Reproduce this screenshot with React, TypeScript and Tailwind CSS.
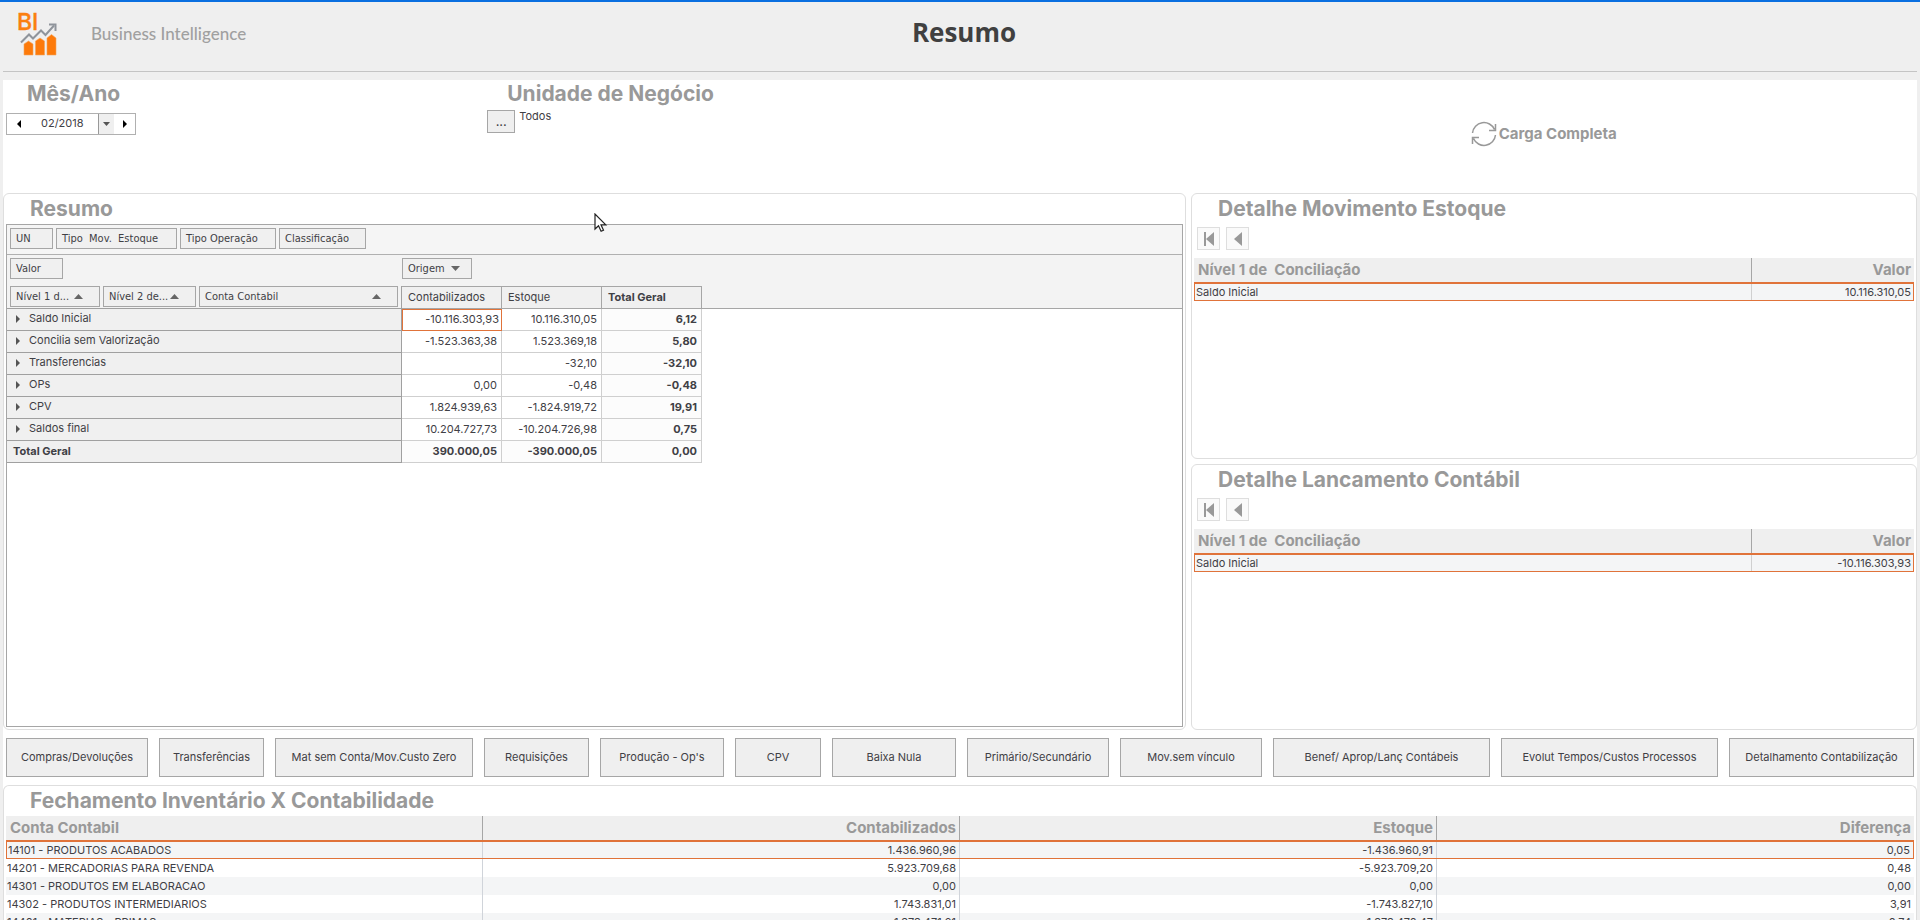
import type { ReactNode } from 'react'

interface PivotRow {
  label: string
  contabilizados: string
  estoque: string
  total: string
}

interface DetailPanelProps {
  title: string
  value: string
}

const pivotRows: PivotRow[] = [
  { label: 'Saldo Inicial', contabilizados: '-10.116.303,93', estoque: '10.116.310,05', total: '6,12' },
  { label: 'Concilia sem Valorização', contabilizados: '-1.523.363,38', estoque: '1.523.369,18', total: '5,80' },
  { label: 'Transferencias', contabilizados: '', estoque: '-32,10', total: '-32,10' },
  { label: 'OPs', contabilizados: '0,00', estoque: '-0,48', total: '-0,48' },
  { label: 'CPV', contabilizados: '1.824.939,63', estoque: '-1.824.919,72', total: '19,91' },
  { label: 'Saldos final', contabilizados: '10.204.727,73', estoque: '-10.204.726,98', total: '0,75' },
]

const actions = [
  { label: 'Compras/Devoluções', size: 'flex-[140_1_0%]' },
  { label: 'Transferências', size: 'flex-[103_1_0%]' },
  { label: 'Mat sem Conta/Mov.Custo Zero', size: 'flex-[196_1_0%]' },
  { label: 'Requisições', size: 'flex-[103_1_0%]' },
  { label: "Produção - Op's", size: 'flex-[122_1_0%]' },
  { label: 'CPV', size: 'flex-[84_1_0%]' },
  { label: 'Baixa Nula', size: 'flex-[122_1_0%]' },
  { label: 'Primário/Secundário', size: 'flex-[140_1_0%]' },
  { label: 'Mov.sem vínculo', size: 'flex-[140_1_0%]' },
  { label: 'Benef/ Aprop/Lanç Contábeis', size: 'flex-[215_1_0%]' },
  { label: 'Evolut Tempos/Custos Processos', size: 'flex-[215_1_0%]' },
  { label: 'Detalhamento Contabilização', size: 'flex-[183_1_0%]' },
]

const closingRows = [
  ['14101 - PRODUTOS ACABADOS', '1.436.960,96', '-1.436.960,91', '0,05'],
  ['14201 - MERCADORIAS PARA REVENDA', '5.923.709,68', '-5.923.709,20', '0,48'],
  ['14301 - PRODUTOS EM ELABORACAO', '0,00', '0,00', '0,00'],
  ['14302 - PRODUTOS INTERMEDIARIOS', '1.743.831,01', '-1.743.827,10', '3,91'],
  ['14401 - MATERIAS - PRIMAS', '1.373.471,21', '-1.373.470,47', '0,74'],
]

function Logo() {
  return (
    <svg className="h-12 w-11 overflow-visible" viewBox="0 0 44 48" aria-hidden="true">
      <text x="2" y="20" fontFamily="Inter, sans-serif" fontSize="23" fontWeight="500" fill="#fb7f10" stroke="#fb7f10" strokeWidth="0.4">
        BI
      </text>
      <path d="M6 32.500l8-8 4 4 8-8 4.500 4.500L39 15.500" fill="none" stroke="#8f949b" strokeWidth="2" />
      <path d="M34 14.500h6.500V21" fill="none" stroke="#8f949b" strokeWidth="2" />
      <path d="M9 45V34l4.500-3 4.500 3v11zM20.500 45V31l4.500-3 4.500 3v14zM32 45V28l4.500-3.500L41 28v17z" fill="#fd7a0a" stroke="#f3a45c" strokeWidth="0.6" />
    </svg>
  )
}

function Triangle({ points, className }: { points: string; className: string }) {
  return (
    <svg className={`shrink-0 ${className}`} viewBox="0 0 10 10" preserveAspectRatio="none" fill="currentColor" aria-hidden="true">
      <polygon points={points} />
    </svg>
  )
}

const UP = '0,10 5,0 10,10'
const DOWN = '0,0 10,0 5,10'
const LEFT = '10,0 0,5 10,10'
const RIGHT = '0,0 10,5 0,10'

function FieldChip({ className = '', children }: { className?: string; children: ReactNode }) {
  return (
    <button
      type="button"
      className={`flex h-[21px] items-center whitespace-pre border border-[#a6a6a6] bg-[#f0f0f0] px-[5px] text-left font-['DejaVu_Sans_Condensed',sans-serif] text-[11px] leading-none ${className}`}
    >
      {children}
    </button>
  )
}

function PanelTitle({ children }: { children: ReactNode }) {
  return <h2 className="pl-6 text-[21px] font-bold leading-[30px] text-[#999]">{children}</h2>
}

function PivotGrid() {
  return (
    <div className="flex-1 border border-[#a6a6a6] bg-white">
      <div className="flex h-[30px] gap-[3px] border-b border-[#b0b0b0] bg-[#f5f5f5] px-[3px] pt-[3px]">
        <FieldChip className="w-[43px]">UN</FieldChip>
        <FieldChip className="w-[121px]">Tipo  Mov.  Estoque</FieldChip>
        <FieldChip className="w-24">Tipo Operação</FieldChip>
        <FieldChip className="w-[87px]">Classificação</FieldChip>
      </div>
      <table className="w-full table-fixed border-separate border-spacing-0 text-[11px]">
        <colgroup>
          <col className="w-[395px]" />
          <col className="w-[100px]" />
          <col className="w-[100px]" />
          <col className="w-[100px]" />
          <col />
        </colgroup>
        <thead className="bg-[#f3f3f3]">
          <tr className="h-[31px] align-top">
            <td className="px-[3px] pt-[3px]">
              <FieldChip className="w-[53px]">Valor</FieldChip>
            </td>
            <td className="pt-[3px]" colSpan={4}>
              <FieldChip className="w-[70px]">
                Origem
                <Triangle points={DOWN} className="ml-1.5 h-[5px] w-[9px] text-[#666]" />
              </FieldChip>
            </td>
          </tr>
          <tr className="h-[23px]">
            <td className="border-b border-r border-[#a0a0a0] px-[3px] pb-px align-top">
              <div className="flex gap-[3px]">
                <FieldChip className="w-[90px] justify-between pr-4">
                  Nível 1 d...
                  <Triangle points={UP} className="h-[5px] w-[9px] text-[#666]" />
                </FieldChip>
                <FieldChip className="w-[93px] justify-between pr-4">
                  Nível 2 de...
                  <Triangle points={UP} className="h-[5px] w-[9px] text-[#666]" />
                </FieldChip>
                <FieldChip className="flex-1 justify-between pr-4">
                  Conta Contabil
                  <Triangle points={UP} className="h-[5px] w-[9px] text-[#666]" />
                </FieldChip>
              </div>
            </td>
            <th className="border-b border-r border-t border-[#a6a6a6] bg-[#f0f0f0] px-1.5 text-left font-normal leading-none">Contabilizados</th>
            <th className="border-b border-r border-t border-[#a6a6a6] bg-[#f0f0f0] px-1.5 text-left font-normal leading-none">Estoque</th>
            <th className="border-b border-r border-t border-[#a6a6a6] bg-[#f0f0f0] px-1.5 text-left font-bold leading-none">Total Geral</th>
            <td className="border-b border-[#a6a6a6]" />
          </tr>
        </thead>
        <tbody>
          {pivotRows.map((row, i) => (
            <tr key={row.label} className="h-[22px]">
              <th className="border-b border-r border-[#a0a0a0] bg-[#f0f0f0] pl-[9px] text-left font-normal leading-none">
                <button type="button" className="flex items-center gap-[9px] pb-0.5">
                  <Triangle points={RIGHT} className="h-2 w-1 text-[#555]" />
                  {row.label}
                </button>
              </th>
              <td
                className={
                  i === 0
                    ? 'border border-[#e0733a] pb-0.5 pr-0.5 text-right leading-none'
                    : 'border-b border-r border-[#cfcfcf] pr-1 text-right leading-none'
                }
              >
                {row.contabilizados}
              </td>
              <td className="border-b border-r border-[#cfcfcf] pr-1 text-right leading-none">{row.estoque}</td>
              <td className="border-b border-r border-[#cfcfcf] bg-[#fcfcfc] pr-1 text-right font-bold leading-none">{row.total}</td>
              <td />
            </tr>
          ))}
          <tr className="h-[22px] font-bold">
            <th className="border-b border-r border-[#a0a0a0] bg-[#f0f0f0] pl-1.5 text-left leading-none">Total Geral</th>
            <td className="border-b border-r border-[#cfcfcf] bg-[#fcfcfc] pr-1 text-right leading-none">390.000,05</td>
            <td className="border-b border-r border-[#cfcfcf] bg-[#fcfcfc] pr-1 text-right leading-none">-390.000,05</td>
            <td className="border-b border-r border-[#cfcfcf] bg-[#fcfcfc] pr-1 text-right leading-none">0,00</td>
            <td />
          </tr>
        </tbody>
      </table>
    </div>
  )
}

function DetailPanel({ title, value }: DetailPanelProps) {
  return (
    <section className="flex-1 rounded-md border border-[#dedede] bg-white px-0.5">
      <PanelTitle>{title}</PanelTitle>
      <div className="flex gap-1.5 px-[3px] pb-2 pt-[3px] text-[#999]">
        <button type="button" aria-label="Primeiro" className="flex h-[23px] w-[23px] items-center justify-center border border-[#dedede] bg-[#fafafa]">
          <span className="h-3.5 w-0.5 bg-[#999]" />
          <Triangle points={LEFT} className="h-3.5 w-2" />
        </button>
        <button type="button" aria-label="Anterior" className="flex h-[23px] w-[23px] items-center justify-center border border-[#dedede] bg-[#fafafa]">
          <Triangle points={LEFT} className="h-3.5 w-2" />
        </button>
      </div>
      <table className="w-full table-fixed border-separate border-spacing-0">
        <colgroup>
          <col />
          <col className="w-[162px]" />
        </colgroup>
        <thead>
          <tr className="h-6 bg-[#efefef] text-[15px] text-[#999]">
            <th className="whitespace-pre border-r border-[#a6a6a6] pb-0.5 pl-1 text-left leading-none">Nível 1 de  Conciliação</th>
            <th className="pb-0.5 pr-[3px] text-right leading-none">Valor</th>
          </tr>
        </thead>
        <tbody>
          <tr className="h-[19px] bg-[#f4f5f6] text-[11px]">
            <td className="border-b border-l border-t-2 border-[#e0733a] p-0 leading-none">
              <div className="border-r border-[#d0d0d0] pl-px leading-4">Saldo Inicial</div>
            </td>
            <td className="border-b border-r border-t-2 border-[#e0733a] p-0 pr-0.5 text-right leading-4">{value}</td>
          </tr>
        </tbody>
      </table>
    </section>
  )
}

function ClosingTable() {
  return (
    <table className="w-full table-fixed border-separate border-spacing-0">
      <thead>
        <tr className="h-6 bg-[#efefef] text-[15px] text-[#999]">
          <th className="border-r border-[#a6a6a6] pb-0.5 pl-1 text-left leading-none">Conta Contabil</th>
          <th className="border-r border-[#a6a6a6] pb-0.5 pr-[3px] text-right leading-none">Contabilizados</th>
          <th className="border-r border-[#a6a6a6] pb-0.5 pr-[3px] text-right leading-none">Estoque</th>
          <th className="pb-0.5 pr-[3px] text-right leading-none">Diferença</th>
        </tr>
      </thead>
      <tbody>
        {closingRows.map((row, i) => (
          <tr key={row[0]} className={`h-[18px] text-[11px] ${i % 2 === 0 ? 'bg-[#f4f5f6]' : 'bg-white'}`}>
            {row.map((cell, j) => (
              <td
                key={j}
                className={`p-0 leading-none ${i === 0 ? 'border-b border-t-2 border-[#e0733a]' : ''} ${i === 0 && j === 0 ? 'border-l' : ''} ${i === 0 && j === 3 ? 'border-r' : ''}`}
              >
                <div
                  className={`${i === 0 ? 'leading-4' : 'leading-[18px]'} ${j === 0 ? 'pl-px' : 'pr-[3px] text-right'} ${j < 3 ? 'border-r border-[#d0d4da]' : ''}`}
                >
                  {cell}
                </div>
              </td>
            ))}
          </tr>
        ))}
      </tbody>
    </table>
  )
}

export default function App() {
  return (
    <div className="flex h-screen flex-col overflow-hidden bg-[#efefef] font-[Inter,sans-serif] text-[#3f4045]">
      {/* Header */}
      <header className="border-t-2 border-[#0a6fe0] px-[3px] pb-2">
        <div className="grid h-[70px] grid-cols-3 items-start border-b border-[#c4c4c4]">
          <div className="flex items-center gap-8 pl-3 pt-2">
            <Logo />
            <span className="font-[Lato,sans-serif] text-[17px] font-medium text-[#a0a0a0]">Business Intelligence</span>
          </div>
          <h1 className="pl-2 pt-3 text-center font-['Open_Sans',sans-serif] text-[26px] font-bold leading-9 text-[#404040]">Resumo</h1>
        </div>
      </header>

      <main className="mx-[3px] flex min-h-0 flex-1 flex-col bg-white">
        {/* Filters */}
        <div className="grid h-[113px] shrink-0 grid-cols-[484fr_983fr_446fr]">
          <div>
            <label htmlFor="mes-ano" className="block pl-6 text-[21px] font-bold leading-7 text-[#999]">
              Mês/Ano
            </label>
            <div className="ml-[3px] mt-[5px] flex h-[22px] w-[130px] border border-[#b0b0b0] bg-white">
              <button type="button" aria-label="Mês anterior" className="flex w-6 items-center justify-center text-black">
                <Triangle points={LEFT} className="h-2 w-1" />
              </button>
              <div className="relative flex-1">
                <select id="mes-ano" className="block h-[18px] w-full appearance-none bg-transparent pl-2.5 text-[11px] leading-[18px] outline-none">
                  <option>02/2018</option>
                </select>
                <span className="pointer-events-none absolute inset-y-0 right-0 flex w-4 items-center justify-center border-l border-[#999] bg-[#efefef]">
                  <Triangle points={DOWN} className="h-1 w-[7px] text-[#555]" />
                </span>
              </div>
              <button type="button" aria-label="Próximo mês" className="flex w-[21px] items-center justify-center text-black">
                <Triangle points={RIGHT} className="h-2 w-1" />
              </button>
            </div>
          </div>
          <div>
            <h2 className="pl-5 text-[21px] font-bold leading-7 text-[#999]">Unidade de Negócio</h2>
            <div className="flex gap-1 pt-0.5">
              <button type="button" className="h-[23px] w-7 border border-[#a6a6a6] bg-[#efefef] text-[13px] leading-none">
                ...
              </button>
              <span className="text-[11px] leading-3">Todos</span>
            </div>
          </div>
          <div className="pt-10">
            <button type="button" className="flex items-center gap-0.5 text-[15px] font-bold text-[#999]">
              <svg className="h-7 w-[26px]" viewBox="0 0 26 28" fill="none" stroke="currentColor" strokeWidth="1.5" aria-hidden="true">
                <path d="M1.500 13A11.500 11.500 0 0 1 23.500 9.500M24.500 4v6.500H18M24.500 15A11.500 11.500 0 0 1 2.500 18.500M1.500 24v-6.500H8" />
              </svg>
              Carga Completa
            </button>
          </div>
        </div>

        {/* Summary and details */}
        <div className="grid min-h-[537px] shrink-0 grid-cols-[1183fr_726fr] gap-[5px]">
          <section className="flex flex-col rounded-md border border-[#dedede] bg-white px-0.5 pb-0.5">
            <PanelTitle>Resumo</PanelTitle>
            <PivotGrid />
          </section>
          <div className="flex flex-col gap-[5px]">
            <DetailPanel title="Detalhe Movimento Estoque" value="10.116.310,05" />
            <DetailPanel title="Detalhe Lancamento Contábil" value="-10.116.303,93" />
          </div>
        </div>

        {/* Actions */}
        <nav className="flex shrink-0 gap-[11px] px-[3px] py-2">
          {actions.map((action) => (
            <button
              key={action.label}
              type="button"
              className={`h-[39px] whitespace-nowrap border border-[#a6a6a6] bg-[#efefef] text-[11px] ${action.size}`}
            >
              {action.label}
            </button>
          ))}
        </nav>

        {/* Closing */}
        <section className="min-h-0 flex-1 overflow-hidden rounded-t-md border border-b-0 border-[#dedede] px-0.5">
          <PanelTitle>Fechamento Inventário X Contabilidade</PanelTitle>
          <ClosingTable />
        </section>
      </main>

      {/* Pointer */}
      <svg className="pointer-events-none absolute left-[594px] top-[213px] h-5 w-[14px]" viewBox="0 0 14 20" aria-hidden="true">
        <path d="M1 1v15l3.500-3.300 2.600 5.600 2.400-1.100-2.500-5.400h4.800z" fill="#fff" stroke="#222" strokeWidth="1.200" />
      </svg>
    </div>
  )
}
